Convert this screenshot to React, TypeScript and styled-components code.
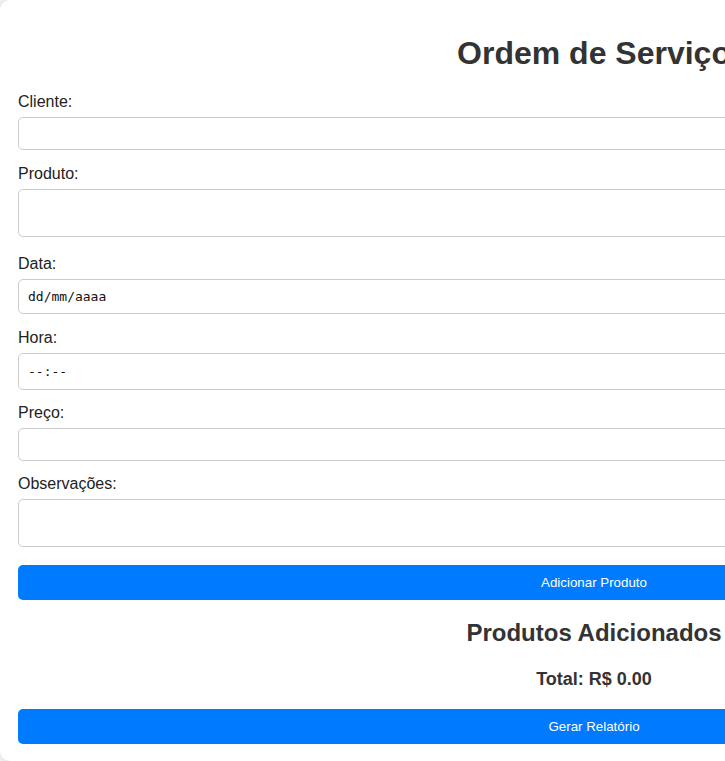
import React from "react";
import styled, { createGlobalStyle } from "styled-components";

const GlobalStyle = createGlobalStyle`
  html, body {
    margin: 0;
    padding: 0;
    overflow: hidden;
    background: #f4f4f4;
  }
  body {
    font-family: Arial, "Liberation Sans", Helvetica, sans-serif;
    color: #333;
  }
  * { box-sizing: border-box; }
`;

const Container = styled.div`
  width: 1188px;
  background: #ffffff;
  border-radius: 10px;
  box-shadow: 0 0 10px rgba(0, 0, 0, 0.1);
  padding: 13px 18px 17px;
`;

const Title = styled.h1`
  margin: 21.5px 0 21px;
  font-size: 32px;
  font-weight: bold;
  line-height: 37px;
  text-align: center;
  color: #333;
`;

const Form = styled.form`
  display: flex;
  flex-direction: column;
`;

const Group = styled.div<{ $after: number }>`
  display: flex;
  flex-direction: column;
  margin-bottom: ${(p) => p.$after}px;
`;

const Label = styled.label`
  display: block;
  font-size: 16px;
  color: #222;
  margin-bottom: 6px;
`;

const TextInput = styled.input`
  width: 100%;
  height: 33px;
  padding: 8px;
  border: 1px solid #ccc;
  border-radius: 5px;
  font-family: Arial, "Liberation Sans", sans-serif;
  font-size: 13.33px;
  background: #fff;
  outline: none;
`;

const TextArea = styled.textarea`
  width: 100%;
  height: 48px;
  padding: 8px;
  border: 1px solid #ccc;
  border-radius: 5px;
  font-family: "DejaVu Sans Mono", monospace;
  font-size: 13.33px;
  resize: none;
  background: #fff;
  outline: none;
  display: block;
`;

const MaskField = styled.div<{ $height: number }>`
  width: 100%;
  height: ${(p) => p.$height}px;
  padding: 0 9px;
  border: 1px solid #ccc;
  border-radius: 5px;
  display: flex;
  align-items: center;
  background: #fff;
  font-family: "DejaVu Sans Mono", "Liberation Mono", monospace;
  font-size: 13px;
  color: #111;
`;

const Button = styled.button`
  display: block;
  width: 100%;
  height: 35px;
  border: none;
  border-radius: 5px;
  background: #007bff;
  color: #fff;
  font-family: Arial, "Liberation Sans", sans-serif;
  font-size: 13.33px;
  cursor: pointer;
`;

const SubTitle = styled.h2`
  margin: 19px 0 22px;
  font-size: 24px;
  font-weight: bold;
  text-align: center;
  color: #333;
`;

const Total = styled.p`
  margin: 0 0 19px;
  font-size: 18px;
  font-weight: bold;
  text-align: center;
  color: #333;
`;

export default function App() {
  return (
    <>
      <GlobalStyle />
      <Container>
        <Title>Ordem de Serviço</Title>
        <Form onSubmit={(e) => e.preventDefault()}>
          <Group $after={15}>
            <Label htmlFor="cliente">Cliente:</Label>
            <TextInput id="cliente" type="text" />
          </Group>
          <Group $after={18.5}>
            <Label htmlFor="produto">Produto:</Label>
            <TextArea id="produto" />
          </Group>
          <Group $after={15}>
            <Label>Data:</Label>
            <MaskField $height={35}>dd/mm/aaaa</MaskField>
          </Group>
          <Group $after={13.5}>
            <Label>Hora:</Label>
            <MaskField $height={37}>--:--</MaskField>
          </Group>
          <Group $after={14.5}>
            <Label htmlFor="preco">Preço:</Label>
            <TextInput id="preco" type="text" />
          </Group>
          <Group $after={17.5}>
            <Label htmlFor="obs">Observações:</Label>
            <TextArea id="obs" />
          </Group>
          <Button type="button">Adicionar Produto</Button>
        </Form>
        <SubTitle>Produtos Adicionados</SubTitle>
        <Total>Total: R$ 0.00</Total>
        <Button type="button">Gerar Relatório</Button>
      </Container>
    </>
  );
}
